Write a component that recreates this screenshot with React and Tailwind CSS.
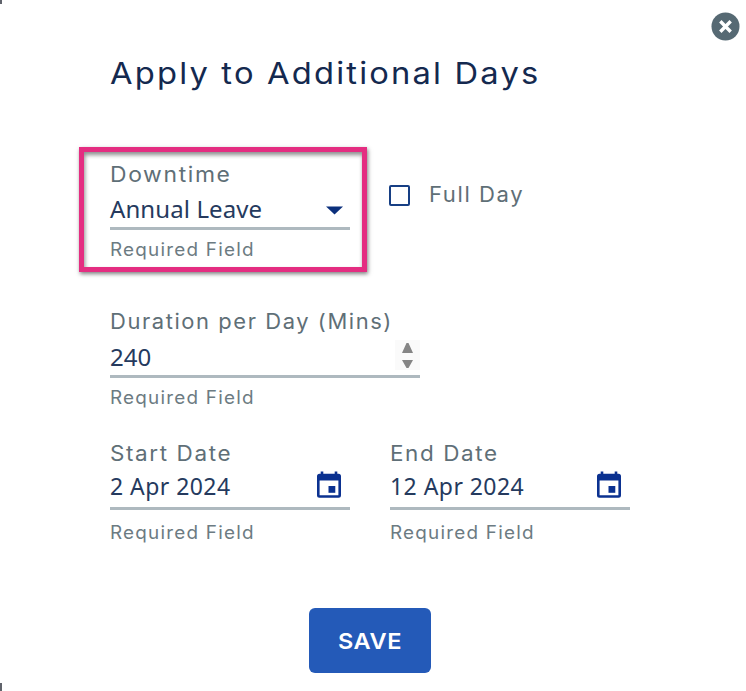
import React from "react";

const LABEL = "block h-6 w-max origin-left whitespace-nowrap font-['Inter',sans-serif] text-[21px] leading-6 text-[#5f6f77]";
const VALUE = "whitespace-nowrap font-['Noto_Sans',sans-serif] text-[#253a5e]";

function Helper({ spacing = "mt-2" }) {
  return (
    <span className={`${spacing} block h-6 w-max origin-left scale-x-[1.05] whitespace-nowrap font-['Inter',sans-serif] text-[18px] leading-6 tracking-[1.15px] text-[#6c7b82]`}>
      Required Field
    </span>
  );
}

function CalendarIcon() {
  return (
    <svg width="26" height="28" viewBox="0 0 26 28" className="block" fill="#0b3190">
      <path
        fillRule="evenodd"
        d="M4.7 0.5h2.6v2.3h11.4V0.5h2.6v2.3h1.2a2.5 2.5 0 0 1 2.5 2.5v19a2.5 2.5 0 0 1-2.5 2.5h-19A2.5 2.5 0 0 1 1 24.3v-19a2.5 2.5 0 0 1 2.5-2.5h1.2zM3.6 9.5v14.7h18.8V9.5z"
      />
      <path d="M12.5 15h6.8v6.8h-6.8z" />
    </svg>
  );
}

function DateField({ label, value }) {
  return (
    <div className="w-[240px]">
      <label className={`${LABEL} scale-x-[1.07] tracking-[1.5px]`}>{label}</label>
      <div className="flex h-[44px] items-start justify-between border-b-[3px] border-[#aeb9bf] pr-2">
        <span className={`${VALUE} text-[23px] leading-[40px] tracking-[0.45px]`}>{value}</span>
        <span className="mt-[5px]">
          <CalendarIcon />
        </span>
      </div>
      <Helper spacing="mt-[11px]" />
    </div>
  );
}

export default function App() {
  return (
    <div className="relative h-[691px] w-[746px] overflow-hidden bg-white">
      <span className="absolute left-0 top-0 h-1 w-0.5 bg-[#60636b]" />
      <span className="absolute bottom-0 left-0 h-2 w-0.5 bg-[#60636b]" />
      <button aria-label="Close" className="absolute left-[711px] top-3">
        <svg width="29" height="29" viewBox="0 0 29 29" className="block">
          <circle cx="14.5" cy="14.5" r="14" fill="#566973" />
          <path d="M9.3 9.3l10.4 10.4M19.7 9.3L9.3 19.7" stroke="#fff" strokeWidth="3.4" />
        </svg>
      </button>

      <main className="flex flex-col pl-[110px] pt-[53px]">
        <h1 className="h-10 w-max origin-left scale-x-[1.09] whitespace-nowrap font-['Inter',sans-serif] text-[30px] font-normal leading-10 tracking-[2px] text-[#14294f]">
          Apply to Additional Days
        </h1>

        <div className="mt-[70px] flex gap-[39px]">
          <div className="relative w-[240px]">
            <label className={`${LABEL} scale-x-[1.09] tracking-[1.5px]`}>Downtime</label>
            <div className="flex h-[43px] items-start justify-between border-b-[3px] border-[#aeb9bf] pr-[7px]">
              <span className={`${VALUE} text-[24px] leading-[44px] tracking-[0.1px]`}>Annual Leave</span>
              <svg width="17" height="9" viewBox="0 0 17 9" className="mt-[19px] block">
                <path d="M0 0.5h17L8.5 8.5z" fill="#0b2f7c" />
              </svg>
            </div>
            <Helper />
            <div className="absolute -left-[31px] -top-[16px] h-[125px] w-[288px] border-[5px] border-[#e42d81] shadow-[1px_2px_4px_rgba(0,0,0,0.5),inset_1px_3px_4px_rgba(0,0,0,0.45)]" />
          </div>
          <label className="mt-5 flex h-6 items-center">
            <span className="h-[21px] w-[21px] shrink-0 rounded-[2px] border-[2.5px] border-[#173f84]" />
            <span className={`${LABEL} ml-[19px] scale-x-[1.05] tracking-[1.5px]`}>Full Day</span>
          </label>
        </div>

        <div className="mt-12 w-[310px]">
          <label className={`${LABEL} scale-x-[1.045] tracking-[1.5px]`}>Duration per Day (Mins)</label>
          <div className="flex h-[44px] items-start justify-between border-b-[3px] border-[#aeb9bf]">
            <span className={`${VALUE} text-[24px] leading-[46px]`}>240</span>
            <span className="mt-[6px] flex h-[30px] w-[25px] items-center justify-center bg-[#fafafa]">
              <svg width="11" height="25" viewBox="0 0 11 25" fill="#858585">
                <path d="M4.5 0h2L11 10H0zM0 17h11l-4.5 8h-2z" />
              </svg>
            </span>
          </div>
          <Helper />
        </div>

        <div className="mt-[32px] flex gap-10">
          <DateField label="Start Date" value="2 Apr 2024" />
          <DateField label="End Date" value="12 Apr 2024" />
        </div>

        <button className="ml-[199px] mt-[63px] h-[65px] w-[122px] rounded-[6px] bg-[#245ab8] font-['Inter',sans-serif] text-[22px] font-semibold leading-none text-white">
          <span className="inline-block scale-x-[1.07] tracking-[0.6px]">SAVE</span>
        </button>
      </main>
    </div>
  );
}
